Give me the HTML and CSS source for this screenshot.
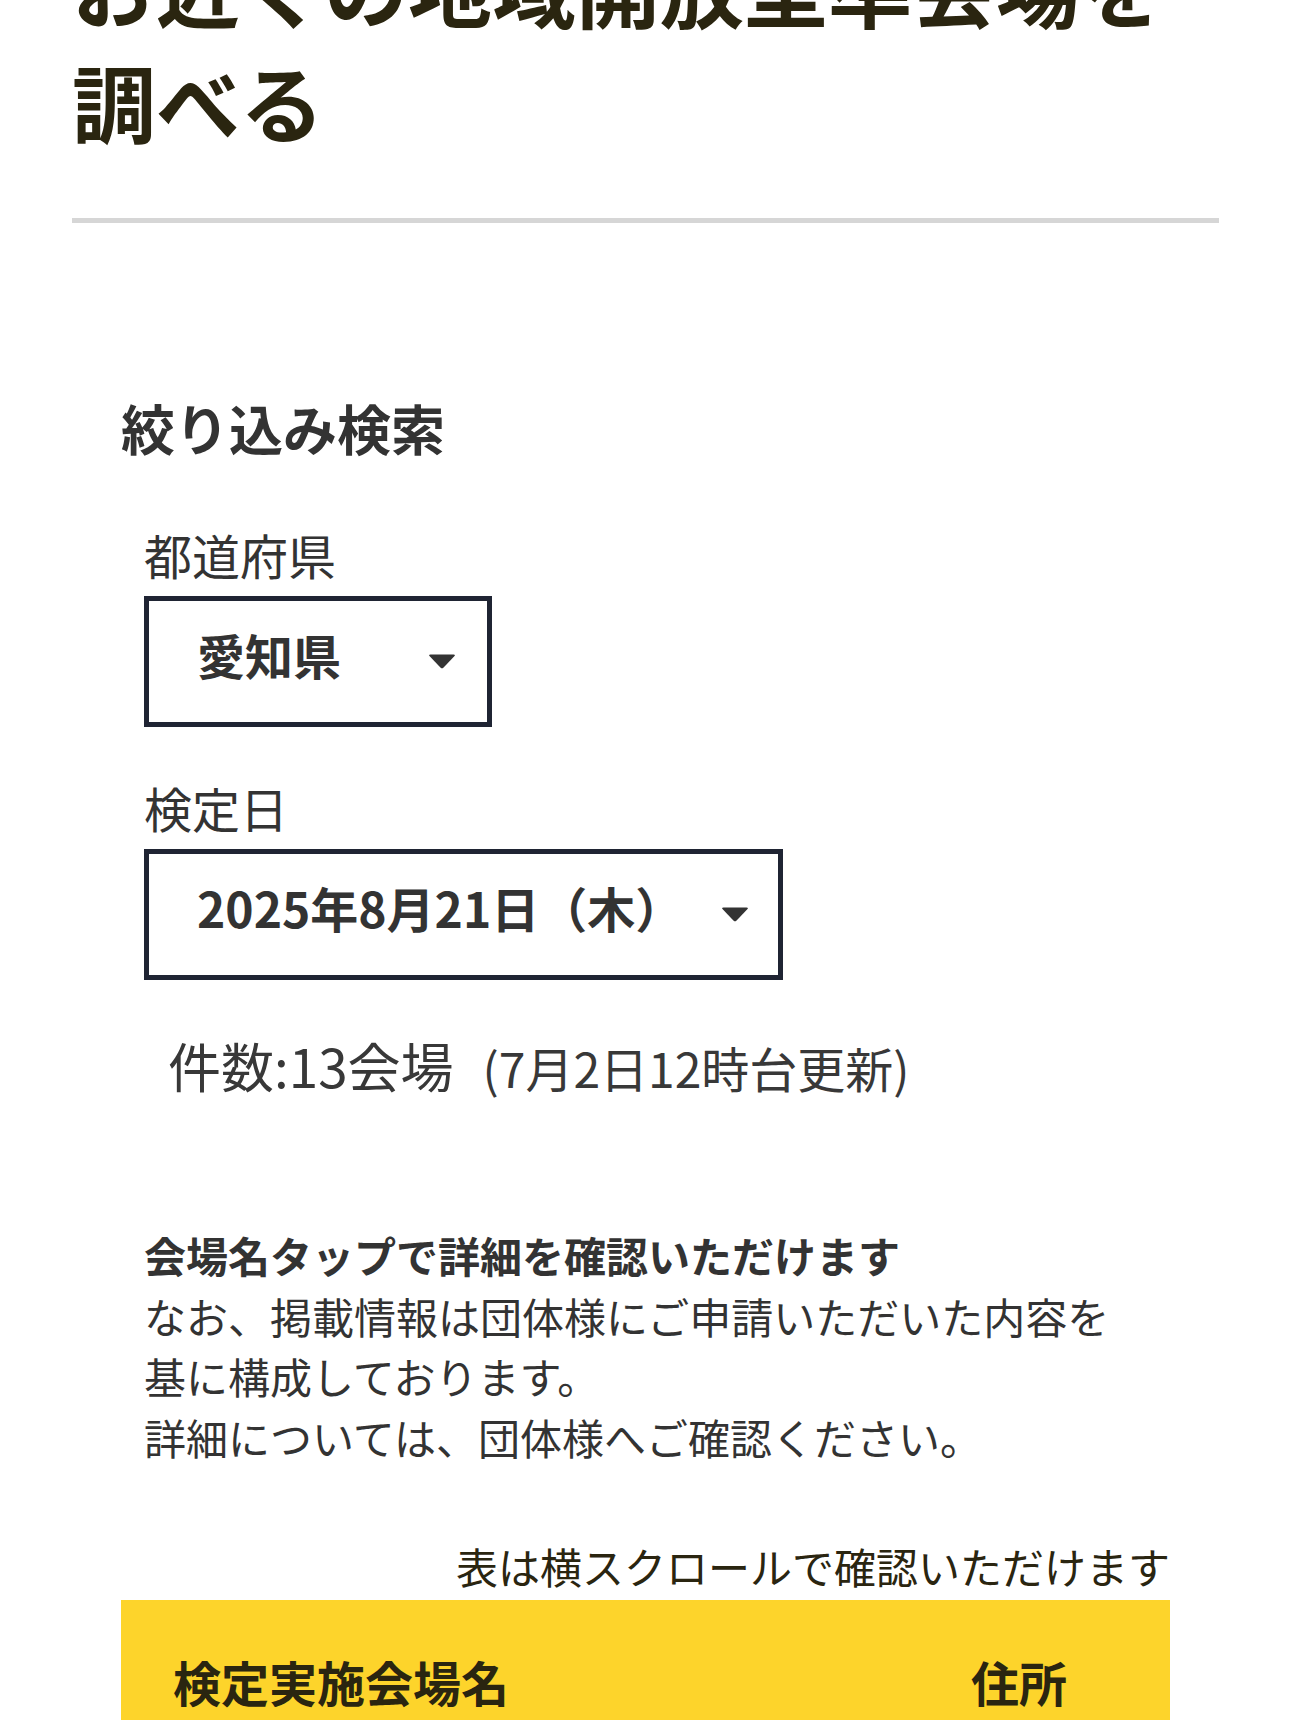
FILE: index.html
```html
<!DOCTYPE html>
<html lang="ja">
<head>
<meta charset="utf-8">
<title>お近くの地域開放型準会場を調べる</title>
<link rel="stylesheet" href="styles.css">
</head>
<body>
<main class="page">
  <h1 class="title">お近くの地域開放型準会場を<br>調べる</h1>
  <hr class="rule">
  <section class="search">
    <h2 class="search-title">絞り込み検索</h2>
    <div class="field">
      <div class="field-label">都道府県</div>
      <div class="select select-pref">
        <span class="select-value">愛知県</span>
        <svg class="caret" viewBox="0 0 28 15" width="28" height="15" aria-hidden="true"><path d="M2.5 0.5 H25.5 Q27.8 0.5 26.3 2.3 L15.6 13.6 Q14 15.2 12.4 13.6 L1.7 2.3 Q0.2 0.5 2.5 0.5 Z" fill="#333"/></svg>
      </div>
    </div>
    <div class="field">
      <div class="field-label">検定日</div>
      <div class="select select-date">
        <span class="select-value">2025年8月21日（木）</span>
        <svg class="caret" viewBox="0 0 28 15" width="28" height="15" aria-hidden="true"><path d="M2.5 0.5 H25.5 Q27.8 0.5 26.3 2.3 L15.6 13.6 Q14 15.2 12.4 13.6 L1.7 2.3 Q0.2 0.5 2.5 0.5 Z" fill="#333"/></svg>
      </div>
    </div>
    <p class="count">件数:13会場<span class="updated">(7月2日12時台更新)</span></p>
    <div class="notes">
      <p class="notes-lead">会場名タップで詳細を確認いただけます</p>
      <p class="notes-body">なお、掲載情報は団体様にご申請いただいた内容を<br>基に構成しております。<br>詳細については、団体様へご確認ください。</p>
    </div>
    <p class="scroll-hint">表は横スクロールで確認いただけます</p>
    <div class="table-wrap">
      <table class="venues">
        <thead>
          <tr>
            <th class="col-name">検定実施会場名</th>
            <th class="col-addr">住所</th>
          </tr>
        </thead>
      </table>
    </div>
  </section>
</main>
</body>
</html>
```

FILE: styles.css
```css
html, body {
  margin: 0;
  padding: 0;
  background: #ffffff;
}

body {
  font-family: "Noto Sans CJK JP", "Noto Sans", sans-serif;
  color: #333333;
  overflow: hidden;
}

.page {
  padding: 0 71px 0 72px;
}

.title {
  margin: -72px 0 0;
  font-size: 84px;
  line-height: 115px;
  font-weight: 700;
  color: #2a2510;
}

.rule {
  margin: 60px 0 0;
  height: 5px;
  border: 0;
  background: #d6d6d6;
}

.search {
  margin: 0 49px 0 49px;
  padding-top: 164px;
}

.search-title {
  margin: 0;
  font-size: 54px;
  line-height: 81px;
  font-weight: 700;
  color: #333333;
}

.field {
  margin-top: 50px;
  padding-left: 23px;
}

.field + .field {
  margin-top: 44px;
}

.field-label {
  font-size: 48px;
  line-height: 72px;
  color: #333333;
  margin-bottom: 6px;
}

.select {
  box-sizing: border-box;
  height: 131px;
  border: 5px solid #1f2433;
  display: flex;
  align-items: center;
  justify-content: space-between;
  padding: 0 31px 0 48px;
}

.select-pref {
  width: 348px;
}

.select-date {
  width: 639px;
  padding-right: 29px;
}

.select-value {
  font-size: 48px;
  font-weight: 700;
  color: #333333;
  line-height: 1;
  margin-bottom: 15px;
}

.caret {
  display: block;
  flex: none;
}

.count {
  margin: 45px 0 0;
  padding-left: 47px;
  font-size: 53px;
  line-height: 80px;
  color: #383838;
}

.updated {
  margin-left: 29px;
  font-size: 48px;
}

.notes {
  margin-top: 118px;
  padding-left: 23px;
  font-size: 42px;
  line-height: 60.5px;
  color: #333333;
}

.notes p {
  margin: 0;
}

.notes-lead {
  font-weight: 700;
}

.scroll-hint {
  margin: 69px 0 0;
  text-align: right;
  font-size: 42px;
  line-height: 60px;
  color: #2a2510;
}

.table-wrap {
  margin-top: 4px;
  overflow: hidden;
}

.venues {
  width: 100%;
  border-collapse: collapse;
  background: #fdd42b;
}

.venues th {
  text-align: left;
  vertical-align: top;
  white-space: nowrap;
  font-size: 48px;
  line-height: 72px;
  font-weight: 700;
  color: #2a2510;
  padding: 45px 52px 60px;
}

.col-name {
  width: 694px;
}
```
